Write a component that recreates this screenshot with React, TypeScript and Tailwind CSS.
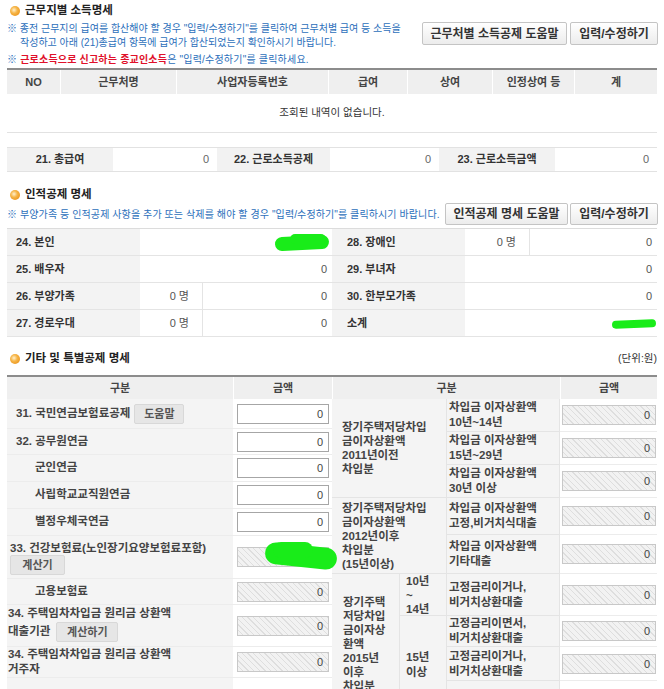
import React from 'react';

// 연말정산 - 근무지별 소득명세 / 인적공제 / 기타 및 특별공제 화면

const Bullet = () => (
  <span className="inline-block h-[10px] w-[10px] shrink-0 rounded-full bg-[radial-gradient(circle_at_40%_40%,#fff1cf_0,#f6b547_38%,#e5860a_100%)]" />
);

const TopButton = ({ children, className = '' }: { children: React.ReactNode; className?: string }) => (
  <button
    className={`h-full rounded-[2px] border border-[#c4c4c4] bg-linear-to-b from-white to-[#ececec] text-[12px] font-bold text-[#333] ${className}`}
  >
    {children}
  </button>
);

const SmallButton = ({ children, className = '' }: { children: React.ReactNode; className?: string }) => (
  <button
    className={`h-[20px] shrink-0 rounded-[2px] border border-[#d8d8d8] bg-[#e6e6e6] text-[11px] font-bold leading-[18px] text-[#555] ${className}`}
  >
    {children}
  </button>
);

const Field = ({ disabled = false, wide = false, children }: { disabled?: boolean; wide?: boolean; children?: React.ReactNode }) => (
  <div
    className={`relative h-[20px] border pr-[5px] text-right text-[11px] font-normal leading-[18px] text-[#444] ${wide ? 'w-[94px]' : 'w-[92px]'} ${
      disabled
        ? 'border-[#c8c8c8] bg-[repeating-linear-gradient(45deg,#f2f2f2_0px,#f2f2f2_3px,#dedede_3px,#dedede_4px)]'
        : 'border-[#a6a6a6] bg-white'
    }`}
  >
    0{children}
  </div>
);

// 여러 줄 라벨 (줄 간격 지정)
const Lines = ({ lines, tight = false }: { lines: string[]; tight?: boolean }) => (
  <div className={tight ? 'leading-[14px]' : 'leading-[15px]'}>
    {lines.map((l, i) => (
      <div key={i}>{l}</div>
    ))}
  </div>
);

const personLeft = [
  { label: '24. 본인', value: '', blob: true },
  { label: '25. 배우자', value: '0' },
  { label: '26. 부양가족', count: '0', value: '0' },
  { label: '27. 경로우대', count: '0', value: '0' },
];

const personRight = [
  { label: '28. 장애인', count: '0', value: '0' },
  { label: '29. 부녀자', value: '0' },
  { label: '30. 한부모가족', value: '0' },
  { label: '소계', value: '', blob: true },
];

type PersonRow = { label: string; value: string; count?: string; blob?: boolean };

const PersonHalf = ({ rows, right }: { rows: PersonRow[]; right?: boolean }) => (
  <div className="w-[325px]">
    {rows.map((r) => (
      <div key={r.label} className="flex h-[27px] border-b border-[#e4e4e4]">
        <div
          className={`flex w-[133px] items-center bg-[#f3f3f3] text-[11px] font-bold text-[#333] ${right ? 'pl-[15px]' : 'pl-[9px]'}`}
        >
          {r.label}
        </div>
        {r.count !== undefined && (
          <div
            className={`flex items-center justify-end border-r border-[#e4e4e4] pr-[13px] text-[11px] text-[#555] ${right ? 'w-[65px]' : 'w-[63px]'}`}
          >
            {r.count} 명
          </div>
        )}
        <div className="relative flex flex-1 items-center justify-end pr-[5px] text-[11px] text-[#555]">
          {r.value}
          {r.blob && !right && (
            <>
              <span className="absolute left-[135px] top-[7px] h-[14px] w-[54px] -rotate-3 rounded-full bg-[#19ec19]" />
              <span className="absolute left-[150px] top-[5px] h-[10px] w-[36px] rounded-full bg-[#19ec19]" />
            </>
          )}
          {r.blob && right && (
            <span className="absolute left-[147px] top-[10px] h-[8px] w-[44px] -rotate-2 rounded-full bg-[#19ec19]" />
          )}
        </div>
      </div>
    ))}
  </div>
);

const leftLabel = 'flex bg-[#f4f4f4] text-[11.5px] font-bold text-[#444] border-b border-[#ececec]';
const leftAmount = 'flex w-[99px] items-center border-b border-[#ececec] pl-[4px]';
const rLabel = 'flex items-center bg-[#f4f4f4] border-b border-r border-[#e4e4e4] text-[11.5px] font-bold text-[#444]';
const rAmount = 'col-start-4 flex items-center border-b border-[#ececec] pl-[2px]';

export default function App() {
  return (
    <div className="w-[664px] bg-white pl-[7px] pr-[7px] pt-[1px] font-['Liberation_Sans','Noto_Sans_CJK_KR',sans-serif] text-[#333]">
      {/* 근무지별 소득명세 */}
      <div className="flex h-[20px] items-center gap-[5px] pl-[3px]">
        <Bullet />
        <span className="text-[11.5px] font-bold text-[#222]">근무지별 소득명세</span>
      </div>
      <div className="mt-[1px] flex h-[28px] justify-between">
        <div className="whitespace-nowrap text-[10px] leading-[14px] text-[#2c6fbb]">
          <div>※ 종전 근무지의 급여를 합산해야 할 경우 "입력/수정하기"를 클릭하여 근무처별 급여 등 소득을</div>
          <div className="pl-[13px]">작성하고 아래 (21)총급여 항목에 급여가 합산되었는지 확인하시기 바랍니다.</div>
        </div>
        <div className="-mr-[1px] flex h-[23px] gap-[3px]">
          <TopButton className="w-[145px]">근무처별 소득공제 도움말</TopButton>
          <TopButton className="w-[88px]">입력/수정하기</TopButton>
        </div>
      </div>
      <div className="mt-[3px] h-[14px] whitespace-nowrap text-[10px] leading-[14px] tracking-[0.2px] text-[#2c6fbb]">
        ※ <span className="font-bold text-[#e0102a]">근로소득으로 신고하는 종교인소득</span>은 "입력/수정하기"를 클릭하세요.
      </div>

      <div className="mt-[1px] grid h-[26px] grid-cols-[53px_116px_152px_79px_85px_82px_83px] border-t-2 border-[#8c8c8c] bg-[#efefef] text-[11px] font-bold text-[#444]">
        {['NO', '근무처명', '사업자등록번호', '급여', '상여', '인정상여 등', '계'].map((h, i) => (
          <div key={h} className={`flex items-center justify-center ${i > 0 ? 'border-l border-white' : ''}`}>
            {h}
          </div>
        ))}
      </div>
      <div className="flex h-[39px] items-center justify-center border-b border-[#e2e2e2] text-[10.5px] text-[#333]">
        조회된 내역이 없습니다.
      </div>

      <div className="mt-[14px] grid h-[25px] grid-cols-[106px_104px_113px_109px_116px_102px] border-y border-[#e2e2e2] text-[11px]">
        <div className="flex items-center justify-center bg-[#f2f2f2] font-bold">21. 총급여</div>
        <div className="flex items-center justify-end pr-[8px] text-[#666]">0</div>
        <div className="flex items-center justify-center bg-[#f2f2f2] font-bold">22. 근로소득공제</div>
        <div className="flex items-center justify-end pr-[8px] text-[#666]">0</div>
        <div className="flex items-center justify-center bg-[#f2f2f2] font-bold">23. 근로소득금액</div>
        <div className="flex items-center justify-end pr-[8px] text-[#666]">0</div>
      </div>

      {/* 인적공제 명세 */}
      <div className="mt-[15px] flex h-[16px] items-center gap-[5px] pl-[3px]">
        <Bullet />
        <span className="text-[11.5px] font-bold text-[#222]">인적공제 명세</span>
      </div>
      <div className="flex h-[22px] items-center justify-between">
        <div className="whitespace-nowrap text-[10px] tracking-[0.1px] text-[#2c6fbb]">
          ※ 부양가족 등 인적공제 사항을 추가 또는 삭제를 해야 할 경우 "입력/수정하기"를 클릭하시기 바랍니다.
        </div>
        <div className="-mr-[1px] flex h-[22px] gap-[2px]">
          <TopButton className="w-[123px]">인적공제 명세 도움말</TopButton>
          <TopButton className="w-[88px]">입력/수정하기</TopButton>
        </div>
      </div>
      <div className="mt-[3px] flex border-t border-[#dcdcdc]">
        <PersonHalf rows={personLeft} />
        <PersonHalf rows={personRight} right />
      </div>

      {/* 기타 및 특별공제 명세 */}
      <div className="mt-[14px] flex h-[16px] items-center justify-between">
        <div className="flex items-center gap-[5px] pl-[3px]">
          <Bullet />
          <span className="text-[11.5px] font-bold text-[#222]">기타 및 특별공제 명세</span>
        </div>
        <span className="text-[10.5px] text-[#333]">(단위:원)</span>
      </div>
      <div className="mt-[8px] grid h-[24px] grid-cols-[226px_99px_228px_97px] border-t-2 border-[#8c8c8c] bg-[#efefef] text-[11px] font-bold text-[#444]">
        <div className="flex items-center justify-center">구분</div>
        <div className="flex items-center justify-center border-l border-white">금액</div>
        <div className="flex items-center justify-center border-l border-white">구분</div>
        <div className="flex items-center justify-center border-l border-white">금액</div>
      </div>

      <div className="flex items-start">
        {/* 왼쪽 */}
        <div className="w-[325px]">
          <div className="flex h-[30px]">
            <div className={`${leftLabel} w-[226px] items-center pl-[9px]`}>
              31. 국민연금보험료공제
              <SmallButton className="ml-[4px] w-[50px]">도움말</SmallButton>
            </div>
            <div className={leftAmount}><Field /></div>
          </div>
          <div className="flex h-[26px]">
            <div className={`${leftLabel} w-[226px] items-center pl-[9px]`}>32. 공무원연금</div>
            <div className={leftAmount}><Field /></div>
          </div>
          {['군인연금', '사립학교교직원연금', '별정우체국연금'].map((t) => (
            <div key={t} className="flex h-[27px]">
              <div className={`${leftLabel} w-[226px] items-center pl-[28px]`}>{t}</div>
              <div className={leftAmount}><Field /></div>
            </div>
          ))}
          <div className="flex h-[43px]">
            <div className={`${leftLabel} w-[226px] flex-col pl-[3px] pt-[6px]`}>
              <div className="leading-[13px]">33. 건강보험료(노인장기요양보험료포함)</div>
              <SmallButton className="w-[55px]">계산기</SmallButton>
            </div>
            <div className={`${leftAmount} relative`}>
              <Field disabled />
              <span className="absolute left-[32px] top-[9px] h-[22px] w-[72px] rotate-6 rounded-full bg-[#19ec19]" />
              <span className="absolute left-[40px] top-[6px] h-[16px] w-[40px] rounded-full bg-[#19ec19]" />
            </div>
          </div>
          <div className="flex h-[26px]">
            <div className={`${leftLabel} w-[226px] items-center pl-[28px]`}>고용보험료</div>
            <div className={leftAmount}><Field disabled /></div>
          </div>
          <div className="flex h-[42px]">
            <div className={`${leftLabel} w-[226px] flex-col pl-[1px] pt-[1px]`}>
              <div className="leading-[14px]">34. 주택임차차입금 원리금 상환액</div>
              <div className="mt-[2px] flex items-center">
                대출기관
                <SmallButton className="ml-[6px] w-[62px]">계산하기</SmallButton>
              </div>
            </div>
            <div className={leftAmount}><Field disabled /></div>
          </div>
          <div className="flex h-[31px]">
            <div className={`${leftLabel} w-[226px] flex-col pl-[1px] leading-[15px]`}>
              <div>34. 주택임차차입금 원리금 상환액</div>
              <div>거주자</div>
            </div>
            <div className={leftAmount}><Field disabled /></div>
          </div>
          <div className="flex h-[40px]">
            <div className={`${leftLabel} w-[226px]`} />
            <div className={leftAmount} />
          </div>
        </div>

        {/* 오른쪽 */}
        <div className="grid w-[325px] grid-cols-[68px_47px_113px_97px] grid-rows-[33px_33px_33px_37px_39px_42px_31px_34px_33px]">
          <div className={`${rLabel} col-span-2 col-start-1 row-span-3 row-start-1 pl-[10px]`}>
            <Lines tight lines={['장기주택저당차입', '금이자상환액', '2011년이전', '차입분']} />
          </div>
          <div className={`${rLabel} col-start-3 row-start-1 pl-[2px]`}>
            <Lines lines={['차입금 이자상환액', '10년~14년']} />
          </div>
          <div className={`${rAmount} row-start-1`}><Field disabled wide /></div>
          <div className={`${rLabel} col-start-3 row-start-2 pl-[2px]`}>
            <Lines lines={['차입금 이자상환액', '15년~29년']} />
          </div>
          <div className={`${rAmount} row-start-2`}><Field disabled wide /></div>
          <div className={`${rLabel} col-start-3 row-start-3 pl-[2px]`}>
            <Lines lines={['차입금 이자상환액', '30년 이상']} />
          </div>
          <div className={`${rAmount} row-start-3`}><Field disabled wide /></div>

          <div className={`${rLabel} col-span-2 col-start-1 row-span-2 row-start-4 pl-[10px]`}>
            <Lines tight lines={['장기주택저당차입', '금이자상환액', '2012년이후', '차입분', '(15년이상)']} />
          </div>
          <div className={`${rLabel} col-start-3 row-start-4 pl-[2px]`}>
            <Lines lines={['차입금 이자상환액', '고정,비거치식대출']} />
          </div>
          <div className={`${rAmount} row-start-4`}><Field disabled wide /></div>
          <div className={`${rLabel} col-start-3 row-start-5 pl-[2px]`}>
            <Lines lines={['차입금 이자상환액', '기타대출']} />
          </div>
          <div className={`${rAmount} row-start-5`}><Field disabled wide /></div>

          <div className={`${rLabel} col-start-1 row-span-4 row-start-6 pl-[11px]`}>
            <Lines tight lines={['장기주택', '저당차입', '금이자상', '환액', '2015년', '이후', '차입분']} />
          </div>
          <div className={`${rLabel} col-start-2 row-start-6 pl-[6px]`}>
            <Lines tight lines={['10년', '~', '14년']} />
          </div>
          <div className={`${rLabel} col-start-2 row-span-3 row-start-7 pl-[6px]`}>
            <Lines lines={['15년', '이상']} />
          </div>
          <div className={`${rLabel} col-start-3 row-start-6 pl-[2px]`}>
            <Lines lines={['고정금리이거나,', '비거치상환대출']} />
          </div>
          <div className={`${rAmount} row-start-6`}><Field disabled wide /></div>
          <div className={`${rLabel} col-start-3 row-start-7 pl-[2px]`}>
            <Lines lines={['고정금리이면서,', '비거치상환대출']} />
          </div>
          <div className={`${rAmount} row-start-7`}><Field disabled wide /></div>
          <div className={`${rLabel} col-start-3 row-start-8 pl-[2px]`}>
            <Lines lines={['고정금리이거나,', '비거치상환대출']} />
          </div>
          <div className={`${rAmount} row-start-8`}><Field disabled wide /></div>
          <div className={`${rLabel} col-start-3 row-start-9 pl-[2px]`} />
          <div className={`${rAmount} row-start-9`} />
        </div>
      </div>
    </div>
  );
}
